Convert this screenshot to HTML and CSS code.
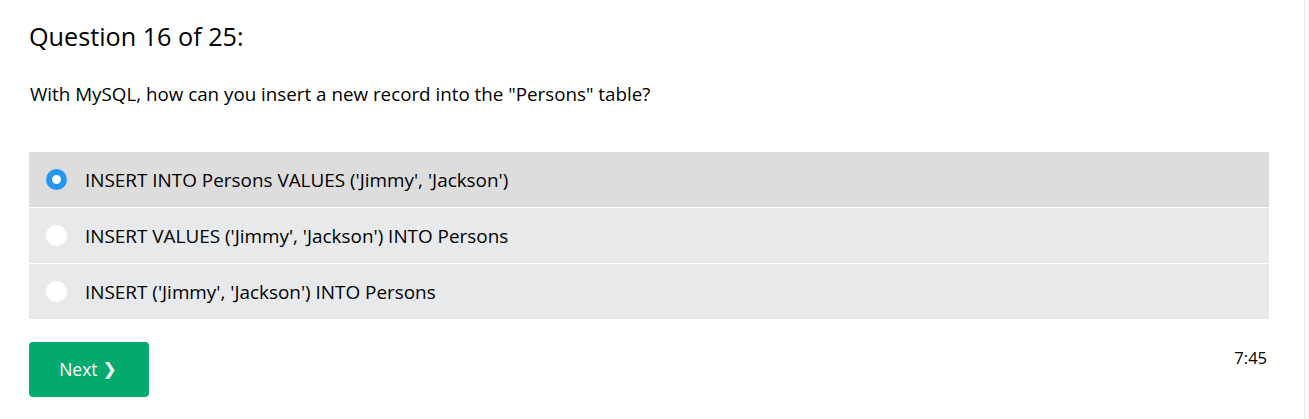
FILE: index.html
```html
<!DOCTYPE html>
<html lang="en">
<head>
<meta charset="utf-8">
<title>Quiz</title>
<link rel="stylesheet" href="styles.css">
</head>
<body>
<div class="page">
  <main class="quiz">
    <h2 class="qnum">Question 16 of 25:</h2>
    <p class="qtext">With MySQL, how can you insert a new record into the "Persons" table?</p>
    <div class="options">
      <label class="opt selected"><span class="radio checked"></span><span class="otext">INSERT INTO Persons VALUES ('Jimmy', 'Jackson')</span></label>
      <label class="opt"><span class="radio"></span><span class="otext">INSERT VALUES ('Jimmy', 'Jackson') INTO Persons</span></label>
      <label class="opt"><span class="radio"></span><span class="otext">INSERT ('Jimmy', 'Jackson') INTO Persons</span></label>
    </div>
    <div class="footer">
      <button class="next">Next <span class="chev">&#10095;</span></button>
      <span class="timer">7:45</span>
    </div>
  </main>
  <div class="scrollbar"></div>
</div>
</body>
</html>
```

FILE: styles.css
```css
html, body {
  margin: 0;
  padding: 0;
  background: #ffffff;
}
body {
  font-family: "Open Sans", "Noto Sans", sans-serif;
  color: #000000;
}
.page {
  display: flex;
  width: 1309px;
  height: 419px;
}
.quiz {
  width: 1241px;
  padding-left: 29px;
  padding-right: 35px;
}
.qnum {
  margin: 0;
  padding-top: 19px;
  font-size: 25.2px;
  font-weight: 400;
  line-height: 34px;
}
.qtext {
  margin: 28px 0 0 1px;
  font-size: 18.8px;
  line-height: 26px;
}
.options {
  margin-top: 45px;
  display: flex;
  flex-direction: column;
  gap: 1px;
}
.opt {
  display: flex;
  align-items: center;
  height: 55px;
  background: #e7e9eb;
  padding-left: 17px;
  font-size: 18.9px;
}
.opt.selected {
  background: #dddddd;
}
.radio {
  width: 21px;
  height: 21px;
  border-radius: 50%;
  background: #ffffff;
  box-sizing: border-box;
  flex: none;
}
.radio.checked {
  background: #ffffff;
  border: 6.5px solid #2196f3;
}
.otext {
  margin-left: 18px;
}
.footer {
  display: flex;
  justify-content: space-between;
  align-items: flex-start;
  margin-top: 23px;
}
.next {
  display: flex;
  align-items: center;
  justify-content: center;
  gap: 5px;
  width: 120px;
  height: 55px;
  border: none;
  border-radius: 4px;
  background: #04aa6d;
  color: #ffffff;
  font-family: "Open Sans", "Noto Sans", sans-serif;
  font-size: 17.5px;
  padding: 0 2px 1px 0;
}
.chev {
  font-family: "DejaVu Sans", sans-serif;
  font-size: 17px;
  font-weight: 700;
  line-height: 1;
}
.timer {
  font-size: 16.5px;
  margin-top: 4px;
  margin-right: 2px;
}
.scrollbar {
  width: 4px;
  margin-left: auto;
  border-left: 1px solid #ececec;
  background: #fafafa;
}
```
